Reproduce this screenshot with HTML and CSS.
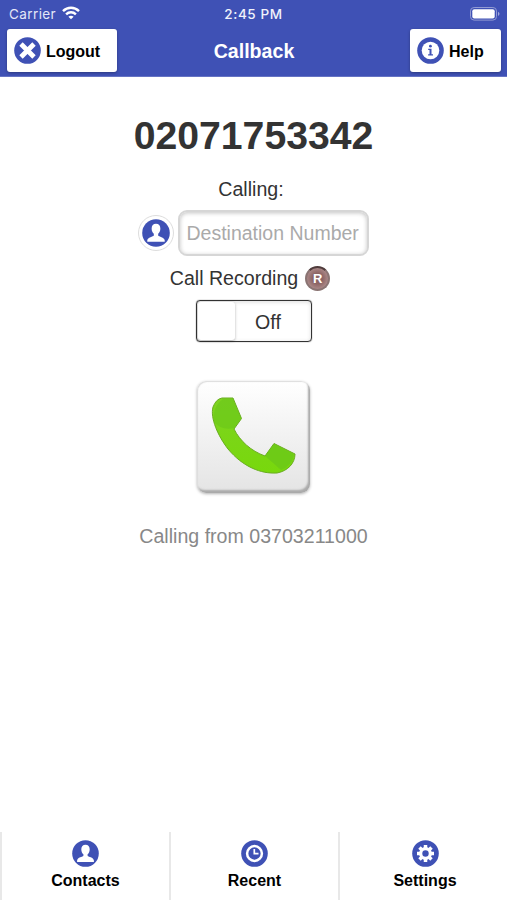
FILE: index.html
```
<!DOCTYPE html>
<html lang="en"><head>
  <meta charset="utf-8">
  <meta name="viewport" content="width=device-width, initial-scale=1.0">
  <title>Callback</title>
  <link rel="stylesheet" href="styles.css">
</head>
<body>
  <!-- Header -->
  <header class="header">
    <div class="status-bar">
      <div class="carrier">
        <span>Carrier</span>
        <svg class="wifi" width="18" height="14" viewBox="0 0 18 14" fill="none" stroke="#fff" stroke-width="2.4">
          <path d="M1 5.1C5.6.6 12.4.6 17 5.1"/>
          <path d="M4.1 8.4c2.8-2.8 7-2.8 9.8 0"/>
          <path d="M9 13.3 6.4 10.7c1.5-1.4 3.7-1.4 5.2 0z" fill="#fff" stroke="none"/>
        </svg>
      </div>
      <span class="time">2:45 PM</span>
      <svg class="battery" width="30" height="14" viewBox="0 0 30 14">
        <rect x=".5" y=".5" width="26" height="12.6" rx="3.6" fill="none" stroke="#929bd3"/>
        <rect x="2.3" y="2.2" width="22.4" height="9.3" rx="2" fill="#fff"/>
        <path d="M28 4.7c2 .8 2 3.4 0 4.2z" fill="#a0a8dc"/>
      </svg>
    </div>
    <div class="nav">
      <button class="nav-btn logout">
        <svg width="27" height="27" viewBox="0 0 27 27">
          <circle cx="13.5" cy="13.5" r="13.3" fill="#3f51b5"/>
          <path d="M7 7l13 13M20 7 7 20" stroke="#fff" stroke-width="4.8"/>
        </svg>
        <span>Logout</span>
      </button>
      <h1 class="title">Callback</h1>
      <button class="nav-btn help">
        <svg width="27" height="27" viewBox="0 0 27 27">
          <circle cx="13.5" cy="13.5" r="13.3" fill="#3f51b5"/>
          <circle cx="13.5" cy="13.5" r="8.8" fill="#fff"/>
          <circle cx="13.4" cy="9.2" r="1.4" fill="#3f51b5"/>
          <path d="M11.2 11.8h3.300v5.5H16v1.2h-4.9v-1.2h1.4v-4.300h-1.300z" fill="#3f51b5"/>
        </svg>
        <span>Help</span>
      </button>
    </div>
  </header>

  <!-- Call form -->
  <main class="content">
    <h2 class="number">02071753342</h2>
    <p class="label">Calling:</p>
    <div class="destination">
      <button class="contact-btn">
        <svg width="28" height="28" viewBox="0 0 27 27">
          <circle cx="13.5" cy="13.5" r="13.3" fill="#3f51b5"/>
          <path d="M13.5 4.7c-2.7 0-4.2 1.8-4.2 4.5 0 2.3.8 4 2.1 5.1v1.5c-.5 1.2-6 1.5-6.3 4.7v1.4h16.8v-1.4c-.3-3.2-5.8-3.5-6.3-4.7v-1.5c1.3-1.1 2.1-2.8 2.1-5.1 0-2.7-1.5-4.5-4.2-4.5z" fill="#fff"/>
        </svg>
      </button>
      <input type="text" class="number-input" placeholder="Destination Number">
    </div>
    <div class="recording">
      <span>Call Recording</span>
      <span class="record-badge">R</span>
    </div>
    <div class="switch">
      <span class="switch-handle"></span>
      <span class="switch-text">Off</span>
    </div>
    <button class="call-btn">
      <svg width="112" height="112" viewBox="0 0 112 112">
        <defs>
          <linearGradient id="phone" x1="0" y1="0" x2="0" y2="1">
            <stop offset="0" stop-color="#7ed321"/>
            <stop offset="1" stop-color="#78d80c"/>
          </linearGradient>
        </defs>
        <path d="M24 16H35L43.500 36.500 36 47C42 59 53 69 67 74L76 61.500 97 72C97 81 90 89 79 91C63 92 45 85 30 67C20 54 12 36 15 25Q18 17 24 16Z" fill="url(#phone)" stroke="#69ad20" stroke-width="1"/>
        <path d="M16 40Q24 49 36 46L43 36.500 35 17 25 17Q14 25 16 40Z" fill="#68c51a" opacity=".55"/>
        <path d="M67 74 76 62 96 72.500Q94 84 83 88Q74 80 67 74Z" fill="#68c51a" opacity=".65"/>
      </svg>
    </button>
    <p class="caller">Calling from 03703211000</p>
  </main>

  <!-- Bottom tabs -->
  <nav class="tabs">
    <a class="tab">
      <svg width="27" height="27" viewBox="0 0 27 27">
        <circle cx="13.5" cy="13.5" r="13.3" fill="#3f51b5"/>
        <path d="M13.5 4.7c-2.7 0-4.2 1.8-4.2 4.5 0 2.3.8 4 2.1 5.1v1.5c-.5 1.2-6 1.5-6.3 4.7v1.4h16.8v-1.4c-.3-3.2-5.8-3.5-6.3-4.7v-1.5c1.3-1.1 2.1-2.8 2.1-5.1 0-2.7-1.5-4.5-4.2-4.5z" fill="#fff"/>
      </svg>
      Contacts
    </a>
    <a class="tab">
      <svg width="27" height="27" viewBox="0 0 27 27">
        <circle cx="13.5" cy="13.5" r="13.3" fill="#3f51b5"/>
        <circle cx="13.5" cy="13.5" r="7.4" fill="none" stroke="#fff" stroke-width="2.5"/>
        <path d="M13.3 9v4.7h4.2" fill="none" stroke="#fff" stroke-width="1.7"/>
      </svg>
      Recent
    </a>
    <a class="tab">
      <svg width="27" height="27" viewBox="0 0 27 27">
        <circle cx="13.5" cy="13.5" r="13.3" fill="#3f51b5"/>
        <path d="M13.500 5v17M5 13.500h17M7.500 7.500l12 12M19.500 7.500l-12 12" stroke="#fff" stroke-width="3.5"/>
        <circle cx="13.5" cy="13.5" r="6.4" fill="#fff"/>
        <circle cx="13.5" cy="13.5" r="3.2" fill="#3f51b5"/>
      </svg>
      Settings
    </a>
  </nav>
</body>
</html>
```
FILE: styles.css
```
* {
  box-sizing: border-box;
}
body {
  margin: 0;
  height: 900px;
  display: flex;
  flex-direction: column;
  background: #fff;
  color: #333;
  font-family: "Liberation Sans", Arial, sans-serif;
  font-size: 19.6px;
  overflow: hidden;
}
button {
  font-family: inherit;
  border: none;
  padding: 0;
  cursor: pointer;
}
svg {
  display: block;
  flex: none;
}
h1, h2, p {
  margin: 0;
}

/* header */
.header {
  height: 77px;
  background: #3f51b5;
  border-bottom: 1px solid #6573c3;
  color: #fff;
}
.status-bar {
  height: 28px;
  padding: 0 7px 0 9px;
  display: grid;
  grid-template-columns: 1fr auto 1fr;
  align-items: center;
  font-family: Inter, sans-serif;
  font-size: 13.5px;
}
.carrier {
  display: flex;
  align-items: center;
  gap: 6px;
  color: #e4e7f7;
  letter-spacing: 0.4px;
}
.wifi {
  margin-top: -2px;
}
.time {
  font-weight: 500;
  font-size: 13.5px;
  letter-spacing: 0.6px;
  color: #f0f2fb;
  padding-right: 2px;
}
.battery {
  justify-self: end;
  margin-top: -1px;
}
.nav {
  display: grid;
  grid-template-columns: 1fr auto 1fr;
  align-items: center;
  padding: 1px 6px 0 7px;
}
.nav-btn {
  height: 43px;
  display: flex;
  align-items: center;
  gap: 5px;
  padding: 0 0 0 7px;
  background: #fff;
  color: #000;
  border-radius: 3px;
  font-size: 16px;
  font-weight: bold;
  box-shadow: 0 1px 3px rgba(0, 0, 0, 0.3);
}
.nav-btn span {
  padding-top: 2px;
}
.logout {
  width: 110px;
}
.help {
  width: 91px;
  justify-self: end;
}
.title {
  font-size: 19.6px;
  line-height: 24px;
}

/* content */
.content {
  flex: 1;
  display: flex;
  flex-direction: column;
  align-items: center;
}
.number {
  margin-top: 36px;
  font-size: 39.2px;
  line-height: 46px;
}
.label {
  margin-top: 18px;
  margin-right: 5px;
  line-height: 24px;
}
.destination {
  margin-top: 9px;
  margin-right: 1px;
  display: flex;
  align-items: center;
  gap: 4px;
}
.contact-btn {
  width: 36px;
  height: 36px;
  display: flex;
  align-items: center;
  justify-content: center;
  background: #fff;
  border: 1px solid #ddd;
  border-radius: 50%;
}
.number-input {
  width: 191px;
  height: 46px;
  padding: 1px 7px 0;
  border: 2px solid #d6d6d6;
  border-radius: 9px;
  background: #fff;
  box-shadow: inset 0 1px 4px rgba(0, 0, 0, 0.24);
  font-family: inherit;
  font-size: 19.5px;
}
.number-input::placeholder {
  color: #aaa;
}
.recording {
  margin-top: 9px;
  margin-right: 7px;
  height: 26px;
  display: flex;
  align-items: center;
  gap: 7px;
}
.record-badge {
  width: 25px;
  height: 25px;
  display: flex;
  align-items: center;
  justify-content: center;
  border-radius: 50%;
  border: 2px solid #8a7473;
  border-top-color: #4f3b3b;
  background: radial-gradient(circle, #8d6565 35%, #b99a9a 90%);
  color: #fff;
  font-size: 13px;
  font-weight: bold;
}
.switch {
  margin-top: 9px;
  width: 116px;
  height: 42px;
  display: flex;
  border: 1px solid #333;
  border-radius: 4px;
  box-shadow: inset 0 1px 4px rgba(0, 0, 0, 0.15), 0 0 1px #333;
}
.switch-handle {
  width: 37px;
  margin: 1px;
  background: #fff;
  border-radius: 3px;
  box-shadow: 0 1px 3px rgba(0, 0, 0, 0.3);
}
.switch-text {
  flex: 1;
  padding-right: 10px;
  line-height: 42px;
  text-align: center;
}
.call-btn {
  margin-top: 39px;
  width: 113px;
  height: 112px;
  padding-left: 1px;
  background: linear-gradient(#fff, #e4e4e4);
  border-radius: 9px;
  box-shadow: inset 1px 1px 1px #ddd, inset -2px -3px 2px #aaa, 0 1px 3px rgba(0, 0, 0, 0.3);
}
.call-btn svg {
  margin-top: 1px;
}
.caller {
  margin-top: 31px;
  color: #888;
  line-height: 24px;
}

/* bottom tabs */
.tabs {
  height: 68px;
  display: grid;
  grid-template-columns: 169px 169px 1fr;
}
.tab {
  display: flex;
  flex-direction: column;
  align-items: center;
  gap: 4px;
  padding-top: 8px;
  border-left: 2px solid #e8e8e8;
  color: #000;
  font-size: 16px;
  font-weight: bold;
  line-height: 20px;
}
.tab:last-child {
  padding-left: 3px;
}
```
